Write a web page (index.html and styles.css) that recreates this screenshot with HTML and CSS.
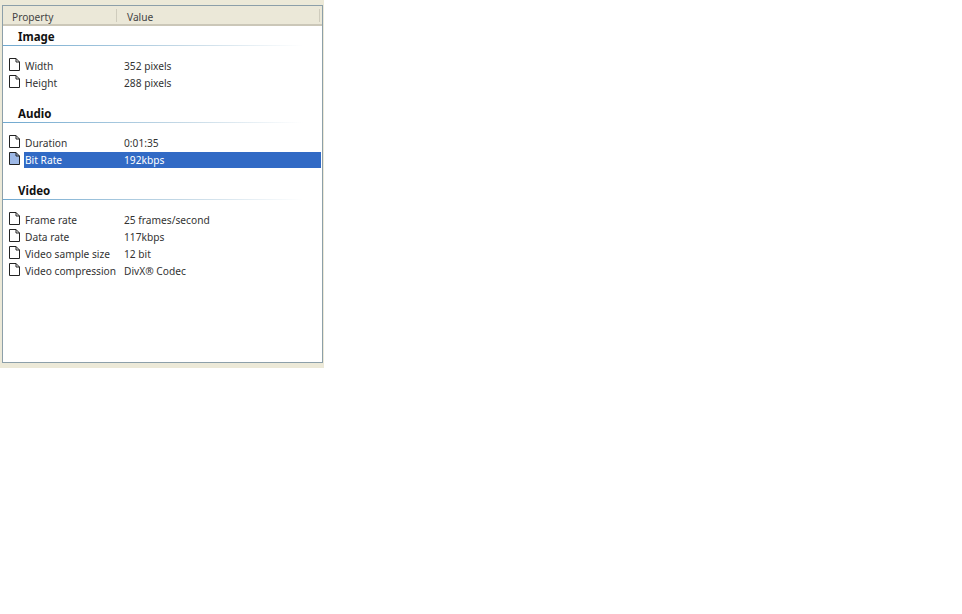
FILE: index.html
```html
<!DOCTYPE html>
<html lang="en">
<head>
<meta charset="UTF-8" />
<title>Properties</title>
<link rel="stylesheet" href="styles.css">
</head>
<body>

<svg class="sprites" width="0" height="0">
  <symbol id="page" viewBox="0 0 11 13">
    <path d="M.5 .5H7L10.5 4V12.5H.5Z" fill="currentColor" stroke="#222"/>
    <path d="M7 .5V4H10.5" fill="none" stroke="#222"/>
  </symbol>
</svg>

<div class="panel">
  <div class="listbox">
    <div class="header">
      <div class="col col-property">Property</div>
      <div class="col col-value">Value</div>
    </div>

    <div class="group">
      <div class="group-title">Image</div>
      <div class="row"><svg class="icon"><use href="#page"/></svg><div class="cells"><span class="name">Width</span><span>352 pixels</span></div></div>
      <div class="row"><svg class="icon"><use href="#page"/></svg><div class="cells"><span class="name">Height</span><span>288 pixels</span></div></div>
    </div>

    <div class="group">
      <div class="group-title">Audio</div>
      <div class="row"><svg class="icon"><use href="#page"/></svg><div class="cells"><span class="name">Duration</span><span>0:01:35</span></div></div>
      <div class="row selected"><svg class="icon"><use href="#page"/></svg><div class="cells"><span class="name">Bit Rate</span><span>192kbps</span></div></div>
    </div>

    <div class="group">
      <div class="group-title">Video</div>
      <div class="row"><svg class="icon"><use href="#page"/></svg><div class="cells"><span class="name">Frame rate</span><span>25 frames/second</span></div></div>
      <div class="row"><svg class="icon"><use href="#page"/></svg><div class="cells"><span class="name">Data rate</span><span>117kbps</span></div></div>
      <div class="row"><svg class="icon"><use href="#page"/></svg><div class="cells"><span class="name">Video sample size</span><span>12 bit</span></div></div>
      <div class="row"><svg class="icon"><use href="#page"/></svg><div class="cells"><span class="name">Video compression</span><span>DivX® Codec</span></div></div>
    </div>
  </div>
</div>

</body>
</html>
```

FILE: styles.css
```css
body {
  margin: 0;
  background: #fff;
  font-family: "Noto Sans", Verdana, sans-serif;
  font-size: 10.2px;
  color: #333;
}

.sprites {
  display: block;
  height: 0;
}

.panel {
  width: 324px;
  height: 368px;
  box-sizing: border-box;
  padding: 5px 1px 5px 2px;
  background: #ece9d8;
}

.listbox {
  height: 358px;
  box-sizing: border-box;
  border: 1px solid #8c9fa9;
  background: #fff;
}

/* Column header */
.header {
  display: flex;
  height: 20px;
  box-sizing: border-box;
  margin-bottom: 3px;
  border-bottom: 2px solid #cbc7b8;
  background: #ebe8d8;
  color: #444;
}
.col {
  box-sizing: border-box;
  margin-top: 3px;
  margin-bottom: 2px;
  line-height: 17px;
}
.col-property {
  width: 114px;
  padding-left: 9px;
  border-right: 1px solid #cfccbd;
}
.col-value {
  flex: 1;
  padding-left: 10px;
  margin-right: 2px;
  border-right: 1px solid #cfccbd;
}

/* Groups */
.group {
  margin-bottom: 15px;
}
.group-title {
  height: 17px;
  box-sizing: border-box;
  margin-bottom: 11px;
  padding-left: 15px;
  font-weight: bold;
  font-size: 11.5px;
  line-height: 16px;
  color: #111;
  position: relative;
}
.group-title::after {
  content: "";
  position: absolute;
  left: 0;
  bottom: 0;
  width: 300px;
  height: 1px;
  background: linear-gradient(to right, #6fa8cf, #c5d9e6 60%, #fff);
}

/* Rows */
.row {
  display: flex;
  align-items: center;
  height: 17px;
  padding-left: 6px;
  color: #ffffff;
}
.icon {
  width: 11px;
  height: 13px;
  margin-right: 4px;
  margin-bottom: 2px;
  flex: none;
}
.cells {
  flex: 1;
  display: flex;
  height: 16px;
  margin-right: 1px;
  line-height: 16px;
  padding-left: 1px;
  color: #333;
}
.name {
  width: 99px;
  flex: none;
}
.selected {
  color: #9db8e6;
}
.selected .cells {
  background: #316ac5;
  color: #fff;
}
```
